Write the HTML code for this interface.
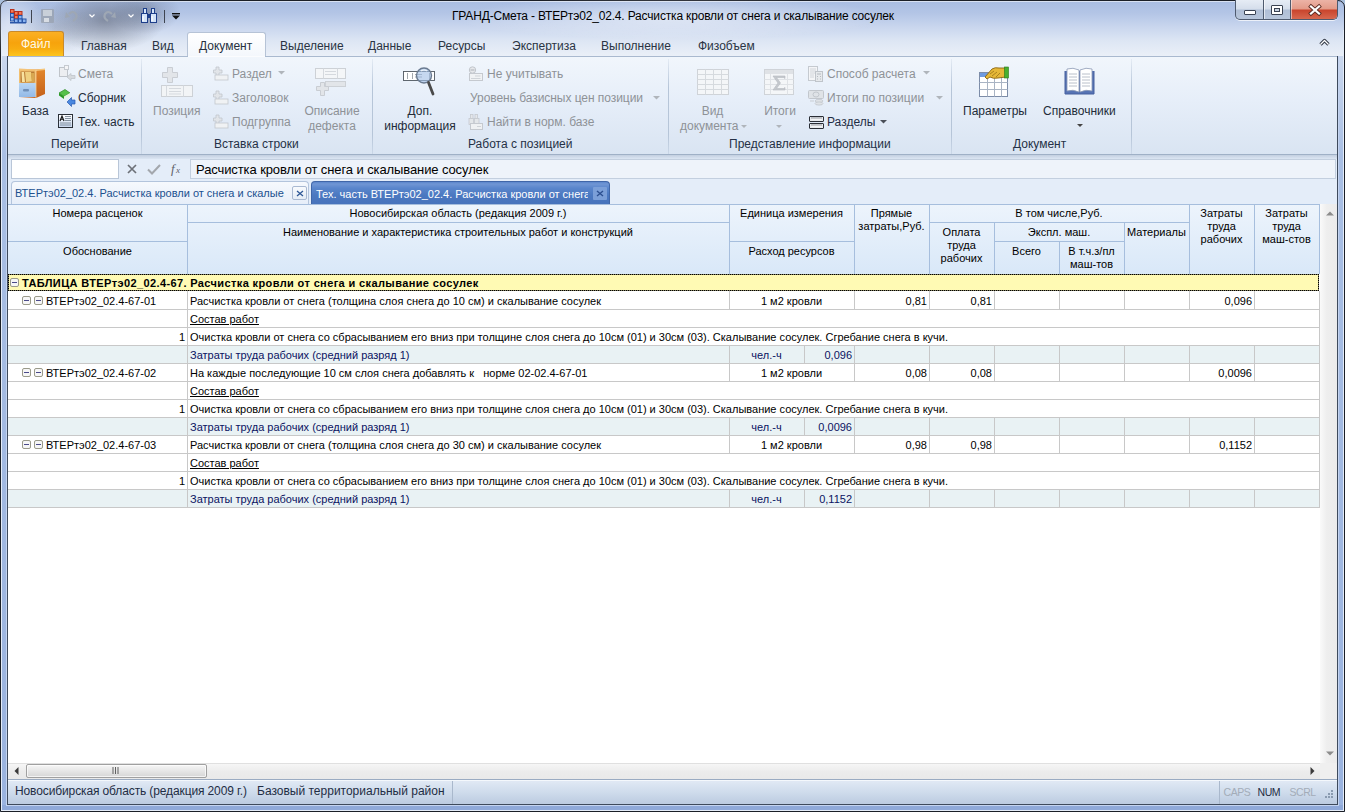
<!DOCTYPE html><html><head><meta charset="utf-8"><style>
*{margin:0;padding:0;box-sizing:border-box}
html,body{width:1345px;height:812px;overflow:hidden}
body{position:relative;font-family:"Liberation Sans",sans-serif;background:#a8bedb}
.a{position:absolute}
.t{position:absolute;white-space:nowrap;line-height:1}
svg.a{overflow:visible}
</style></head><body>
<div class="a" style="left:0px;top:0px;width:1345px;height:812px;background:linear-gradient(180deg,#a9bde2 0px,#b3c5e6 12px,#c9d6ee 26px,#dde6f4 40px,#ebf0f8 56px);border:1px solid #1b1f27;border-radius:7px 7px 0 0"></div>
<div class="a" style="left:0px;top:0px;width:1345px;height:56px;background:radial-gradient(ellipse 60px 32px at 105px 20px,rgba(70,75,90,.5),rgba(70,75,90,0)),radial-gradient(ellipse 35px 22px at 145px 12px,rgba(60,70,90,.3),rgba(60,70,90,0)),radial-gradient(ellipse 40px 26px at 55px 28px,rgba(90,100,120,.2),rgba(90,100,120,0)),radial-gradient(ellipse 220px 22px at 672px 18px,rgba(255,255,255,.5),rgba(255,255,255,0)),radial-gradient(ellipse 30px 35px at 12px 22px,rgba(255,255,255,.4),rgba(255,255,255,0));border-radius:7px 7px 0 0"></div>
<div class="a" style="left:7px;top:1px;width:1331px;height:1px;background:rgba(255,255,255,.55)"></div>
<div class="a" style="left:1px;top:56px;width:6px;height:755px;background:linear-gradient(#cbd8ee,#a9bfe4 100px,#9ab3df)"></div>
<div class="a" style="left:1338px;top:56px;width:6px;height:755px;background:linear-gradient(#cbd8ee,#a9bfe4 100px,#9ab3df)"></div>
<div class="a" style="left:1px;top:805px;width:1343px;height:6px;background:#8fa9d9"></div>
<div class="a" style="left:1px;top:30px;width:1px;height:781px;background:#e4ecf8"></div>
<div class="a" style="left:1343px;top:30px;width:1px;height:781px;background:#e4ecf8"></div>
<div class="a" style="left:6px;top:56px;width:1px;height:750px;background:#c4d4f0"></div>
<div class="a" style="left:1338px;top:56px;width:1px;height:750px;background:#c4d4f0"></div>
<div class="a" style="left:6px;top:805px;width:1333px;height:1px;background:#c4d4f0"></div>
<div class="a" style="left:1px;top:810px;width:1343px;height:1px;background:#e4ecf8"></div>
<div class="a" style="left:7px;top:56px;width:1px;height:749px;background:#3e4a5c"></div>
<div class="a" style="left:1337px;top:56px;width:1px;height:749px;background:#3e4a5c"></div>
<div class="a" style="left:7px;top:804px;width:1331px;height:1px;background:#3e4a5c"></div>
<div class="t " style="left:452px;top:9.84px;font-size:12px;color:#000;font-weight:normal;letter-spacing:-0.17px">ГРАНД-Смета - ВТЕРтэ02_02.4. Расчистка кровли от снега и скалывание сосулек</div>
<div class="a" style="left:1235px;top:0px;width:103px;height:20px;background:linear-gradient(#e6ecf5 0,#d5deeb 9px,#b0bfd6 10px,#b8c6db 19px);border:1px solid #4e5a6e;border-top:none;border-radius:0 0 5px 5px;box-shadow:0 1px 0 rgba(255,255,255,.7)"></div>
<div class="a" style="left:1263px;top:0px;width:1px;height:19px;background:#4e5a6e"></div>
<div class="a" style="left:1264px;top:0px;width:1px;height:19px;background:rgba(255,255,255,.6)"></div>
<div class="a" style="left:1290px;top:0px;width:1px;height:19px;background:#4e5a6e"></div>
<div class="a" style="left:1291px;top:0px;width:46px;height:19px;background:linear-gradient(#ecb3a6 0,#e39a88 9px,#c9442c 10px,#d7684f 19px);border-radius:0 0 4px 0;box-shadow:inset 1px 0 0 rgba(255,255,255,.5)"></div>
<div class="a" style="left:1244px;top:10px;width:12px;height:5px;background:#fff;border:1px solid #3a4252;border-radius:1px"></div>
<div class="a" style="left:1271px;top:5px;width:12px;height:10px;border:1px solid #3a4252;background:#fff;border-radius:1px"></div>
<div class="a" style="left:1274px;top:8px;width:6px;height:4px;border:1px solid #3a4252;background:#c8d2e0"></div>
<svg class="a" style="left:1309px;top:5px;" width="12" height="10" viewBox="0 0 12 10"><path d="M2 1.5 L10 8.5 M10 1.5 L2 8.5" stroke="#5a2a22" stroke-width="4" stroke-linecap="square"/><path d="M2 1.5 L10 8.5 M10 1.5 L2 8.5" stroke="#fff" stroke-width="2.3" stroke-linecap="square"/></svg>
<svg class="a" style="left:10px;top:9px;" width="16" height="15" viewBox="0 0 16 15"><g stroke-width="1"><rect x="0.5" y="0.5" width="3.5" height="3.5" fill="#f47a5a" stroke="#b8301c"/><rect x="0.5" y="4.5" width="3.5" height="3.5" fill="#8ab4f0" stroke="#2a56a8"/><rect x="0.5" y="8.5" width="3.5" height="3.5" fill="#8ab4f0" stroke="#2a56a8"/><rect x="4.5" y="2.5" width="3.5" height="3.5" fill="#f47a5a" stroke="#b8301c"/><rect x="4.5" y="6.5" width="3.5" height="3.5" fill="#f47a5a" stroke="#b8301c"/><rect x="4.5" y="10.0" width="3.5" height="3.5" fill="#8ab4f0" stroke="#2a56a8"/><rect x="8.5" y="2.5" width="3.5" height="3.5" fill="#f47a5a" stroke="#b8301c"/><rect x="8.5" y="6.5" width="3.5" height="3.5" fill="#8ab4f0" stroke="#2a56a8"/><rect x="8.5" y="10.0" width="3.5" height="3.5" fill="#8ab4f0" stroke="#2a56a8"/><rect x="12.5" y="10.0" width="3.5" height="3.5" fill="#8ab4f0" stroke="#2a56a8"/></g><rect x="0" y="13" width="16" height="1.5" fill="#2a56a8"/></svg>
<div class="a" style="left:31px;top:10px;width:1px;height:13px;background:#3e4450"></div>
<div class="a" style="left:41px;top:9px;width:13px;height:14px;background:#9aa3b0;border-radius:1px;opacity:.8"></div>
<div class="a" style="left:43px;top:10px;width:9px;height:6px;background:#c9d0d9"></div>
<div class="a" style="left:44px;top:18px;width:5px;height:4px;background:#d8dde4"></div>
<svg class="a" style="left:64px;top:9px;" width="14" height="14" viewBox="0 0 14 14"><path d="M5 5 Q9 1 12 5 Q14 9 9 12" fill="none" stroke="#9ea7b4" stroke-width="2.2"/><path d="M2 3 L6 8 L1 9 Z" fill="#9ea7b4"/></svg>
<svg class="a" style="left:89px;top:14px;" width="6" height="4" viewBox="0 0 6 4"><path d="M0.5 0.5 L3 3 L5.5 0.5" fill="none" stroke="#fff" stroke-width="1.2"/></svg>
<svg class="a" style="left:103px;top:9px;" width="14" height="14" viewBox="0 0 14 14"><path d="M9 5 Q5 1 2 5 Q0 9 5 12" fill="none" stroke="#9ea7b4" stroke-width="2.2"/><path d="M12 3 L8 8 L13 9 Z" fill="#9ea7b4"/></svg>
<svg class="a" style="left:128px;top:14px;" width="6" height="4" viewBox="0 0 6 4"><path d="M0.5 0.5 L3 3 L5.5 0.5" fill="none" stroke="#fff" stroke-width="1.2"/></svg>
<svg class="a" style="left:141px;top:8px;" width="16" height="15" viewBox="0 0 16 15"><g stroke="#1e3f8a" stroke-width="1" fill="#d4e4f8"><rect x="2.5" y=".5" width="3" height="5"/><rect x="10.5" y=".5" width="3" height="5"/><rect x=".5" y="5.5" width="6" height="9"/><rect x="9.5" y="5.5" width="6" height="9"/></g><rect x="6.5" y="6" width="3" height="4" fill="#1e3f8a"/><path d="M2 8 V13 M11 8 V13" stroke="#fff" stroke-width="1.2"/></svg>
<div class="a" style="left:164px;top:10px;width:1px;height:13px;background:#3e4450"></div>
<svg class="a" style="left:172px;top:13px;" width="8" height="7" viewBox="0 0 8 7"><rect x="0" y="0" width="8" height="1.4" fill="#111"/><path d="M0 2.6 L8 2.6 L4 6.6 Z" fill="#111"/></svg>
<div class="a" style="left:8px;top:31px;width:56px;height:25px;background:linear-gradient(#fbb025,#f7a30c 45%,#f8ac10 70%,#fcc51f);border:1px solid #c98a2a;border-bottom:none;border-radius:3px 3px 0 0"></div>
<div class="t " style="left:21px;top:37.84px;font-size:12px;color:#fffbe8;font-weight:normal;">Файл</div>
<div class="a" style="left:187px;top:32px;width:79px;height:25px;background:linear-gradient(#ffffff,#f3f7fc);border:1px solid #b6c3d6;border-bottom:none;border-radius:3px 3px 0 0"></div>
<div class="t " style="left:199px;top:39.84px;font-size:12px;color:#28313e;font-weight:normal;">Документ</div>
<div class="t " style="left:81px;top:39.84px;font-size:12px;color:#2a3443;font-weight:normal;">Главная</div>
<div class="t " style="left:152px;top:39.84px;font-size:12px;color:#2a3443;font-weight:normal;">Вид</div>
<div class="t " style="left:280px;top:39.84px;font-size:12px;color:#2a3443;font-weight:normal;">Выделение</div>
<div class="t " style="left:368px;top:39.84px;font-size:12px;color:#2a3443;font-weight:normal;">Данные</div>
<div class="t " style="left:438px;top:39.84px;font-size:12px;color:#2a3443;font-weight:normal;">Ресурсы</div>
<div class="t " style="left:512px;top:39.84px;font-size:12px;color:#2a3443;font-weight:normal;">Экспертиза</div>
<div class="t " style="left:601px;top:39.84px;font-size:12px;color:#2a3443;font-weight:normal;">Выполнение</div>
<div class="t " style="left:698px;top:39.84px;font-size:12px;color:#2a3443;font-weight:normal;">Физобъем</div>
<svg class="a" style="left:1319px;top:38px;" width="11" height="9" viewBox="0 0 11 9"><path d="M1.5 6.5 L5.5 2.5 L9.5 6.5" fill="none" stroke="#333a48" stroke-width="3.2" stroke-linejoin="round"/><path d="M1.5 6.5 L5.5 2.5 L9.5 6.5" fill="none" stroke="#fff" stroke-width="1.2" stroke-linejoin="round"/></svg>
<div class="a" style="left:8px;top:56px;width:1329px;height:99px;background:linear-gradient(#f1f6fc 0%,#e6eef9 45%,#d9e4f2 100%);border-top:1px solid #a9b9cf"></div>
<div class="a" style="left:8px;top:154px;width:1329px;height:1px;background:#9fb0c6"></div>
<div class="a" style="left:8px;top:155px;width:1329px;height:4px;background:linear-gradient(#c3cfe0,#dce6f3)"></div>
<div class="a" style="left:188px;top:56px;width:77px;height:1px;background:#fbfcfe"></div>
<div class="a" style="left:141px;top:59px;width:1px;height:95px;background:linear-gradient(rgba(180,195,215,.2),#b6c5d8 30%,#b6c5d8 80%,rgba(180,195,215,.4))"></div>
<div class="a" style="left:372px;top:59px;width:1px;height:95px;background:linear-gradient(rgba(180,195,215,.2),#b6c5d8 30%,#b6c5d8 80%,rgba(180,195,215,.4))"></div>
<div class="a" style="left:668px;top:59px;width:1px;height:95px;background:linear-gradient(rgba(180,195,215,.2),#b6c5d8 30%,#b6c5d8 80%,rgba(180,195,215,.4))"></div>
<div class="a" style="left:951px;top:59px;width:1px;height:95px;background:linear-gradient(rgba(180,195,215,.2),#b6c5d8 30%,#b6c5d8 80%,rgba(180,195,215,.4))"></div>
<div class="a" style="left:1131px;top:59px;width:1px;height:95px;background:linear-gradient(rgba(180,195,215,.2),#b6c5d8 30%,#b6c5d8 80%,rgba(180,195,215,.4))"></div>
<div class="t " style="left:51px;top:137.84px;font-size:12px;color:#253146;font-weight:normal;">Перейти</div>
<div class="t " style="left:214px;top:137.84px;font-size:12px;color:#253146;font-weight:normal;">Вставка строки</div>
<div class="t " style="left:468px;top:137.84px;font-size:12px;color:#253146;font-weight:normal;">Работа с позицией</div>
<div class="t " style="left:729px;top:137.84px;font-size:12px;color:#253146;font-weight:normal;">Представление информации</div>
<div class="t " style="left:1013px;top:137.84px;font-size:12px;color:#253146;font-weight:normal;">Документ</div>
<svg class="a" style="left:18px;top:67px;" width="29" height="33" viewBox="0 0 29 33"><defs><linearGradient id="cabs" x1="0" x2="0" y1="0" y2="1"><stop offset="0" stop-color="#e2872c"/><stop offset="1" stop-color="#c4601a"/></linearGradient><linearGradient id="drw" x1="0" x2="0" y1="0" y2="1"><stop offset="0" stop-color="#b9d6f4"/><stop offset="1" stop-color="#93b9e6"/></linearGradient></defs>
<path d="M1 2.5 L18 2.5 L27 2 L27 27 L18 31 L1 30 Z" fill="url(#cabs)"/>
<path d="M1 1.5 L18 2.5 L27 1.5 L27 3 L18 4 L1 3 Z" fill="#f4c47a"/>
<rect x="1" y="3" width="17" height="13" fill="#f2c070"/>
<rect x="2.5" y="4.5" width="14" height="11" fill="#b87a34"/>
<path d="M3.5 5 L6 5 L7 15 L4 15 Z" fill="#f8e2a0"/><path d="M7 5 L13 5 L14 14.5 L8 15 Z" fill="#f0d080"/><path d="M13 6 L16 6 L16 15 L14 15 Z" fill="#d8a850"/>
<rect x="1" y="16" width="17" height="14" fill="url(#drw)"/>
<rect x="5" y="22" width="6" height="2.5" rx="1" fill="#6f8fb8"/>
<path d="M18 3 L18 31" stroke="#f6d29a" stroke-width=".8"/></svg>
<div class="t " style="left:22px;top:104.84px;font-size:12px;color:#222b38;font-weight:normal;">База</div>
<svg class="a" style="left:58px;top:65px;" width="18" height="17" viewBox="0 0 18 17"><rect x="1.5" y="2.5" width="8" height="9" fill="#eceef1" stroke="#bfc4ca"/><rect x="6.5" y=".5" width="4" height="4" fill="#f4f5f7" stroke="#c5cad0"/><path d="M9 12 L13 8.5 L13 10.5 L17 10.5 L17 13.5 L13 13.5 L13 15.5 Z" fill="#d6dade" stroke="#bfc4ca" stroke-width=".8"/></svg>
<div class="t " style="left:78px;top:67.84px;font-size:12px;color:#8e9297;font-weight:normal;">Смета</div>
<svg class="a" style="left:58px;top:88px;" width="18" height="19" viewBox="0 0 18 19"><path d="M1 5 L7 1.5 L12 5 L6 8.5 Z" fill="#56c04a" stroke="#2a8a22" stroke-width=".7"/><path d="M1 5 L6 8.5 L6 11 L1 7.5 Z" fill="#2a9a24"/><path d="M6 8.5 L12 5 L12 7.5 L6 11 Z" fill="#e8f4e0"/><path d="M9 14 L13.5 9.5 L13.5 12 L17 12 L17 16 L13.5 16 L13.5 18.5 Z" fill="#4a88e0" stroke="#2a5ab0" stroke-width=".7"/></svg>
<div class="t " style="left:78px;top:91.84px;font-size:12px;color:#222b38;font-weight:normal;">Сборник</div>
<svg class="a" style="left:58px;top:114px;" width="16" height="15" viewBox="0 0 16 15"><defs><linearGradient id="txg" x1="0" x2="0" y1="0" y2="1"><stop offset="0" stop-color="#fff"/><stop offset="1" stop-color="#c8d8f0"/></linearGradient></defs><rect x=".5" y=".5" width="14" height="13" fill="url(#txg)" stroke="#2a3038"/><path d="M2 7 L4 2 L6 7 M2.8 5.3 H5.2" fill="none" stroke="#111" stroke-width="1.1"/><path d="M7 2.5 H13 M7 4.5 H13 M7 6.5 H13 M2 9 H13 M2 11 H13" stroke="#6a7888" stroke-width=".8"/></svg>
<div class="t " style="left:78px;top:115.84px;font-size:12px;color:#222b38;font-weight:normal;">Тех. часть</div>
<svg class="a" style="left:161px;top:67px;" width="32" height="30" viewBox="0 0 32 30"><path d="M6.5 .5 H11.5 V5.5 H16.5 V10.5 H11.5 V15.5 H6.5 V10.5 H1.5 V5.5 H6.5 Z" fill="#e2e5e9" stroke="#c9cdd3"/><rect x=".5" y="18.5" width="31" height="11" fill="#f2f4f6" stroke="#cdd1d6"/><path d="M5.5 18.5 V29.5 M22.5 18.5 V29.5 M8 21.5 H20 M8 24.5 H20 M8 27 H20" stroke="#d5d9de"/></svg>
<div class="t " style="left:153px;top:104.84px;font-size:12px;color:#8e9297;font-weight:normal;">Позиция</div>
<svg class="a" style="left:213px;top:66px;" width="16" height="15" viewBox="0 0 16 15"><path d="M3 1 H6 V4 H9 V7 H6 V10 H3 V7 H0.5 V4 H3 Z" fill="#e2e5e9" stroke="#c2c7cd" stroke-width=".8"/><rect x="2" y="9" width="13" height="5" fill="#f0f2f4" stroke="#c2c7cd" stroke-width=".8"/></svg>
<svg class="a" style="left:213px;top:90px;" width="16" height="15" viewBox="0 0 16 15"><path d="M3 1 H6 V4 H9 V7 H6 V10 H3 V7 H0.5 V4 H3 Z" fill="#e2e5e9" stroke="#c2c7cd" stroke-width=".8"/><rect x="2" y="9" width="13" height="5" fill="#f0f2f4" stroke="#c2c7cd" stroke-width=".8"/></svg>
<svg class="a" style="left:213px;top:114px;" width="16" height="15" viewBox="0 0 16 15"><path d="M3 1 H6 V4 H9 V7 H6 V10 H3 V7 H0.5 V4 H3 Z" fill="#e2e5e9" stroke="#c2c7cd" stroke-width=".8"/><rect x="2" y="9" width="13" height="5" fill="#f0f2f4" stroke="#c2c7cd" stroke-width=".8"/></svg>
<div class="t " style="left:232px;top:67.84px;font-size:12px;color:#8e9297;font-weight:normal;">Раздел</div>
<svg class="a" style="left:278px;top:71px;" width="7" height="4" viewBox="0 0 7 4"><path d="M0 0 H7 L3.5 3.5Z" fill="#b0b5bb"/></svg>
<div class="t " style="left:232px;top:91.84px;font-size:12px;color:#8e9297;font-weight:normal;">Заголовок</div>
<div class="t " style="left:232px;top:115.84px;font-size:12px;color:#8e9297;font-weight:normal;">Подгруппа</div>
<svg class="a" style="left:315px;top:68px;" width="32" height="29" viewBox="0 0 32 29"><rect x=".5" y=".5" width="30" height="10" fill="#f4f6f8" stroke="#cdd1d6"/><path d="M8.5 .5 V10.5 M22.5 .5 V10.5 M10 3.5 H21 M10 6.5 H21" stroke="#d5d9de"/><rect x="10.5" y="13.5" width="20" height="5" fill="#e2e5e9" stroke="#cdd1d6"/><path d="M5.5 14.5 H9.5 V18.5 H13.5 V22.5 H9.5 V27.5 H5.5 V22.5 H1.5 V18.5 H5.5 Z" fill="#e2e5e9" stroke="#c9cdd3"/></svg>
<div class="t" style="left:296px;width:72px;text-align:center;top:104.84px;font-size:12px;color:#8e9297;font-weight:normal;">Описание</div>
<div class="t" style="left:296px;width:72px;text-align:center;top:119.84px;font-size:12px;color:#8e9297;font-weight:normal;">дефекта</div>
<svg class="a" style="left:403px;top:66px;" width="36" height="32" viewBox="0 0 36 32"><rect x=".5" y="5.5" width="31" height="9" fill="#fff" stroke="#505860" stroke-width=".9"/><path d="M4.5 7 V13 M9.5 7 V13 M12 8.5 H19 M12 11 H19 M26.5 7 V13" stroke="#8a9098" stroke-width=".8"/><circle cx="21" cy="9.5" r="7.5" fill="rgba(160,190,230,.6)" stroke="#6a7a90" stroke-width="1.4"/><path d="M18 5 Q21 3 24 5" stroke="#fff" stroke-width="1.2" fill="none" opacity=".8"/><path d="M25.5 16.5 L30 28" stroke="#4a4a4a" stroke-width="2.8" stroke-linecap="round"/></svg>
<div class="t" style="left:380px;width:80px;text-align:center;top:104.84px;font-size:12px;color:#222b38;font-weight:normal;">Доп.</div>
<div class="t" style="left:380px;width:80px;text-align:center;top:119.84px;font-size:12px;color:#222b38;font-weight:normal;">информация</div>
<svg class="a" style="left:468px;top:66px;" width="16" height="16" viewBox="0 0 16 16"><circle cx="4.5" cy="4" r="3.2" fill="#e6e8eb" stroke="#c2c6cc"/><path d="M2.5 4 H6.5" stroke="#b5b9bf" stroke-width="1.2"/><rect x="1.5" y="7.5" width="13" height="7" fill="#f0f2f4" stroke="#c5c9cf"/><path d="M7 10 H12.5 M3 12.5 H12.5" stroke="#cfd3d8"/></svg>
<div class="t " style="left:487px;top:67.84px;font-size:12px;color:#8e9297;font-weight:normal;">Не учитывать</div>
<div class="t " style="left:470px;top:91.84px;font-size:12px;color:#8e9297;font-weight:normal;letter-spacing:-0.05px">Уровень базисных цен позиции</div>
<svg class="a" style="left:653px;top:96px;" width="7" height="4" viewBox="0 0 7 4"><path d="M0 0 H7 L3.5 3.5Z" fill="#b0b5bb"/></svg>
<svg class="a" style="left:468px;top:114px;" width="16" height="16" viewBox="0 0 16 16"><g fill="#e4e7ea" stroke="#c5c9cf" stroke-width=".8"><rect x="2.5" y=".5" width="2.5" height="4"/><rect x="7" y=".5" width="2.5" height="4"/><rect x="1" y="4.5" width="4.5" height="6"/><rect x="6.5" y="4.5" width="4.5" height="6"/></g><rect x="2.5" y="9.5" width="12" height="6" fill="#eff1f3" stroke="#c5c9cf"/><path d="M9 12.5 H13" stroke="#cfd3d8"/></svg>
<div class="t " style="left:487px;top:115.84px;font-size:12px;color:#8e9297;font-weight:normal;">Найти в норм. базе</div>
<svg class="a" style="left:697px;top:69px;" width="32" height="26" viewBox="0 0 32 26"><rect x=".5" y=".5" width="31" height="25" fill="#f4f6f8" stroke="#cfd3d8"/><path d="M.5 5.5 H31.5 M.5 10.5 H31.5 M.5 15.5 H31.5 M.5 20.5 H31.5 M8.5 .5 V25.5 M16.5 .5 V25.5 M24.5 .5 V25.5" stroke="#d6dade"/></svg>
<div class="t" style="left:680px;width:65px;text-align:center;top:104.84px;font-size:12px;color:#8e9297;font-weight:normal;">Вид</div>
<div class="t " style="left:680px;top:119.84px;font-size:12px;color:#8e9297;font-weight:normal;">документа</div>
<svg class="a" style="left:741px;top:125px;" width="6" height="3" viewBox="0 0 6 3"><path d="M0 0 H6 L3 3Z" fill="#b0b5bb"/></svg>
<svg class="a" style="left:764px;top:69px;" width="30" height="26" viewBox="0 0 30 26"><rect x=".5" y=".5" width="29" height="25" fill="#f4f6f8" stroke="#cfd3d8"/><rect x="1" y="1" width="28" height="4" fill="#dfe2e6"/><path d="M.5 10.5 H29.5 M.5 15.5 H29.5 M.5 20.5 H29.5 M6.5 5 V25.5 M23.5 5 V25.5" stroke="#dfe2e6"/><path d="M9 7 H21 L21 9.5 L19.5 8.5 H12.5 L16.5 14 L12.5 19.5 H19.5 L21 18.5 L21 21 H9 L14 14 Z" fill="#c5c9ce" stroke="#b5b9bf" stroke-width=".6"/></svg>
<div class="t" style="left:755px;width:50px;text-align:center;top:104.84px;font-size:12px;color:#8e9297;font-weight:normal;">Итоги</div>
<svg class="a" style="left:776px;top:125px;" width="6" height="3" viewBox="0 0 6 3"><path d="M0 0 H6 L3 3Z" fill="#b0b5bb"/></svg>
<svg class="a" style="left:808px;top:66px;" width="17" height="16" viewBox="0 0 17 16"><rect x=".5" y=".5" width="9" height="14" fill="#f4f5f7" stroke="#c5cad0"/><path d="M2 3 H8 M2 5 H8 M2 7 H8 M2 9 H6 M2 11 H6" stroke="#c9cdd3" stroke-width=".8"/><rect x="7.5" y="5.5" width="7" height="10" fill="#e6e9ec" stroke="#bfc4ca"/><path d="M9 8 H13 M9 10.5 H10 M12 10.5 H13 M9 13 H10 M12 13 H13" stroke="#b5bac0"/></svg>
<div class="t " style="left:827px;top:67.84px;font-size:12px;color:#8e9297;font-weight:normal;">Способ расчета</div>
<svg class="a" style="left:923px;top:71px;" width="7" height="4" viewBox="0 0 7 4"><path d="M0 0 H7 L3.5 3.5Z" fill="#b0b5bb"/></svg>
<svg class="a" style="left:808px;top:89px;" width="17" height="17" viewBox="0 0 17 17"><rect x=".5" y="1.5" width="15" height="8" rx="1" fill="#dfe3e7" stroke="#c2c7cd"/><ellipse cx="8" cy="5.5" rx="3" ry="2.5" fill="none" stroke="#c2c7cd"/><ellipse cx="11" cy="12" rx="4" ry="1.6" fill="#e0e3e7" stroke="#c2c7cd" stroke-width=".8"/><ellipse cx="11" cy="14.5" rx="4" ry="1.6" fill="#e0e3e7" stroke="#c2c7cd" stroke-width=".8"/><path d="M2 12 H6" stroke="#c9cdd3"/></svg>
<div class="t " style="left:827px;top:91.84px;font-size:12px;color:#8e9297;font-weight:normal;">Итоги по позиции</div>
<svg class="a" style="left:936px;top:96px;" width="7" height="4" viewBox="0 0 7 4"><path d="M0 0 H7 L3.5 3.5Z" fill="#b0b5bb"/></svg>
<svg class="a" style="left:809px;top:116px;" width="15" height="13" viewBox="0 0 15 13"><rect x=".5" y=".5" width="14" height="5" rx=".5" fill="#e8ebee" stroke="#2a2e36"/><rect x=".5" y="7.5" width="14" height="5" rx=".5" fill="#e8ebee" stroke="#2a2e36"/><path d="M2.5 3 H12.5 M2.5 10 H12.5" stroke="#fff" stroke-width="1.2"/><path d="M2 2 H13 M2 9 H13" stroke="#5a6068" stroke-width=".6"/></svg>
<div class="t " style="left:827px;top:115.84px;font-size:12px;color:#1f2d44;font-weight:normal;">Разделы</div>
<svg class="a" style="left:880px;top:120px;" width="7" height="4" viewBox="0 0 7 4"><path d="M0 0 H7 L3.5 3.5Z" fill="#4a4f58"/></svg>
<svg class="a" style="left:978px;top:66px;" width="34" height="32" viewBox="0 0 34 32"><rect x="1.5" y="6.5" width="28" height="24" fill="#fff" stroke="#7c8ca8"/><rect x="2" y="7" width="27" height="4" fill="#6f9be0"/><path d="M1.5 16.5 H29.5 M1.5 23.5 H29.5 M9.5 11 V30.5 M16.5 11 V30.5 M23.5 11 V30.5" stroke="#a9b4c4"/><path d="M7 11 L14 3 Q17 1 21 2 L27 2 L28 11 L20 12 Q15 13 12 11 L9 13 Z" fill="#e6b838" stroke="#8a6410" stroke-width=".9"/><path d="M12 8 L16 5 M14 10 L19 6 M18 11 L22 7" stroke="#9a7418" stroke-width=".8"/><rect x="26.5" y="1" width="4" height="11" fill="#49b030" stroke="#2a7a1a" stroke-width=".6"/></svg>
<div class="t " style="left:963px;top:104.84px;font-size:12px;color:#222b38;font-weight:normal;">Параметры</div>
<svg class="a" style="left:1064px;top:67px;" width="31" height="29" viewBox="0 0 31 29"><path d="M1 4 L1 27 L30 27 L30 4" fill="#5673b4" stroke="#46609e" stroke-width="1"/><path d="M3 2 Q9 0 15 3 L15 25 Q9 22 3 24 Z" fill="#fff" stroke="#8a98b4" stroke-width=".8"/><path d="M28 2 Q22 0 16 3 L16 25 Q22 22 28 24 Z" fill="#fff" stroke="#8a98b4" stroke-width=".8"/><path d="M5 7 H13 M5 10 H13 M5 13 H13 M5 16 H13 M5 19 H13 M18 7 H26 M18 10 H26 M18 13 H26 M18 16 H26 M18 19 H26" stroke="#a8b0bc" stroke-width=".8"/></svg>
<div class="t " style="left:1043px;top:104.84px;font-size:12px;color:#222b38;font-weight:normal;">Справочники</div>
<svg class="a" style="left:1077px;top:124px;" width="6" height="3" viewBox="0 0 6 3"><path d="M0 0 H6 L3 3Z" fill="#444"/></svg>
<div class="a" style="left:8px;top:159px;width:1329px;height:22px;background:#e4edf9"></div>
<div class="a" style="left:11px;top:159px;width:108px;height:20px;background:#fff;border:1px solid #b9c6d8"></div>
<svg class="a" style="left:127px;top:164px;" width="10" height="10" viewBox="0 0 10 10"><path d="M1 1 L9 9 M9 1 L1 9" stroke="#6d7178" stroke-width="1.7"/></svg>
<svg class="a" style="left:147px;top:164px;" width="14" height="11" viewBox="0 0 14 11"><path d="M1 5.5 L5 9.5 L13 1" fill="none" stroke="#a3a7ad" stroke-width="2"/></svg>
<svg class="a" style="left:171px;top:162px;" width="13" height="14" viewBox="0 0 13 14"><text x="0" y="11" font-size="13" font-style="italic" font-family="Liberation Serif" fill="#5d6168">f</text><text x="5" y="11" font-size="9" font-style="italic" font-family="Liberation Serif" fill="#5d6168">x</text></svg>
<div class="a" style="left:190px;top:159px;width:1146px;height:20px;background:#eef3fa;border:1px solid #c3cfdf"></div>
<div class="t " style="left:196px;top:163.00px;font-size:13px;color:#000;font-weight:normal;letter-spacing:-0.1px">Расчистка кровли от снега и скалывание сосулек</div>
<div class="a" style="left:8px;top:180px;width:1329px;height:24px;background:#e4edf9"></div>
<div class="a" style="left:11px;top:181px;width:298px;height:23px;background:linear-gradient(#f6f9fd,#e6eef9);border:1px solid #b3c4dc;border-bottom:none;border-radius:4px 4px 0 0"></div>
<div class="t " style="left:15px;top:187.69px;font-size:11px;color:#20508f;font-weight:normal;">ВТЕРтэ02_02.4. Расчистка кровли от снега и скалые</div>
<div class="a" style="left:292px;top:186px;width:15px;height:14px;background:linear-gradient(#f8fafd,#e6edf6);border:1px solid #a9b9d2;border-radius:2px"></div>
<svg class="a" style="left:296px;top:190px;" width="8" height="7" viewBox="0 0 8 7"><path d="M1 1 L7 6 M7 1 L1 6" stroke="#2e5796" stroke-width="1.3"/></svg>
<div class="a" style="left:311px;top:181px;width:299px;height:23px;background:linear-gradient(#5b86cc,#7096d4 2px,#5a86cc 6px,#4b78c0 60%,#4773bc);border:1px solid #4066a8;border-bottom:none;border-radius:4px 4px 0 0"></div>
<div class="t" style="left:316px;top:188.7px;font-size:11px;color:#fff;width:272px;overflow:hidden">Тех. часть ВТЕРтэ02_02.4. Расчистка кровли от снега</div>
<div class="a" style="left:593px;top:187px;width:14px;height:13px;background:#7b9fd8;border-radius:1px"></div>
<svg class="a" style="left:596px;top:190px;" width="8" height="7" viewBox="0 0 8 7"><path d="M1 1 L7 6 M7 1 L1 6" stroke="#2c4f90" stroke-width="1.4"/></svg>
<div class="a" style="left:8px;top:204px;width:1329px;height:559px;background:#fff"></div>
<div class="a" style="left:8px;top:204px;width:1312px;height:70px;background:linear-gradient(#edf4fc,#d9e8f8)"></div>
<div class="a" style="left:8px;top:204px;width:1312px;height:1px;background:#a6bedd"></div>
<div class="a" style="left:187px;top:204px;width:1px;height:70px;background:#a6bedd"></div>
<div class="a" style="left:729px;top:204px;width:1px;height:70px;background:#a6bedd"></div>
<div class="a" style="left:854px;top:204px;width:1px;height:70px;background:#a6bedd"></div>
<div class="a" style="left:929px;top:204px;width:1px;height:70px;background:#a6bedd"></div>
<div class="a" style="left:1189px;top:204px;width:1px;height:70px;background:#a6bedd"></div>
<div class="a" style="left:1254px;top:204px;width:1px;height:70px;background:#a6bedd"></div>
<div class="a" style="left:1319px;top:204px;width:1px;height:70px;background:#a6bedd"></div>
<div class="a" style="left:994px;top:222px;width:1px;height:52px;background:#a6bedd"></div>
<div class="a" style="left:1124px;top:222px;width:1px;height:52px;background:#a6bedd"></div>
<div class="a" style="left:1059px;top:241px;width:1px;height:33px;background:#a6bedd"></div>
<div class="a" style="left:8px;top:241px;width:179px;height:1px;background:#a6bedd"></div>
<div class="a" style="left:187px;top:222px;width:542px;height:1px;background:#a6bedd"></div>
<div class="a" style="left:729px;top:241px;width:125px;height:1px;background:#a6bedd"></div>
<div class="a" style="left:929px;top:222px;width:260px;height:1px;background:#a6bedd"></div>
<div class="a" style="left:994px;top:241px;width:130px;height:1px;background:#a6bedd"></div>
<div class="t" style="left:8px;width:179px;text-align:center;top:207.69px;font-size:11px;color:#000;font-weight:normal;">Номера расценок</div>
<div class="t" style="left:8px;width:179px;text-align:center;top:245.69px;font-size:11px;color:#000;font-weight:normal;">Обоснование</div>
<div class="t" style="left:187px;width:542px;text-align:center;top:207.69px;font-size:11px;color:#000;font-weight:normal;">Новосибирская область (редакция 2009 г.)</div>
<div class="t" style="left:187px;width:542px;text-align:center;top:226.69px;font-size:11px;color:#000;font-weight:normal;">Наименование и характеристика строительных работ и конструкций</div>
<div class="t" style="left:729px;width:125px;text-align:center;top:207.69px;font-size:11px;color:#000;font-weight:normal;">Единица измерения</div>
<div class="t" style="left:729px;width:125px;text-align:center;top:245.69px;font-size:11px;color:#000;font-weight:normal;">Расход ресурсов</div>
<div class="t" style="left:854px;width:75px;text-align:center;top:207.69px;font-size:11px;color:#000;font-weight:normal;">Прямые</div>
<div class="t" style="left:854px;width:75px;text-align:center;top:220.69px;font-size:11px;color:#000;font-weight:normal;">затраты,Руб.</div>
<div class="t" style="left:929px;width:260px;text-align:center;top:207.69px;font-size:11px;color:#000;font-weight:normal;">В том числе,Руб.</div>
<div class="t" style="left:929px;width:65px;text-align:center;top:226.69px;font-size:11px;color:#000;font-weight:normal;">Оплата</div>
<div class="t" style="left:929px;width:65px;text-align:center;top:239.69px;font-size:11px;color:#000;font-weight:normal;">труда</div>
<div class="t" style="left:929px;width:65px;text-align:center;top:252.69px;font-size:11px;color:#000;font-weight:normal;">рабочих</div>
<div class="t" style="left:994px;width:130px;text-align:center;top:226.69px;font-size:11px;color:#000;font-weight:normal;">Экспл. маш.</div>
<div class="t" style="left:994px;width:65px;text-align:center;top:245.69px;font-size:11px;color:#000;font-weight:normal;">Всего</div>
<div class="t" style="left:1059px;width:65px;text-align:center;top:245.69px;font-size:11px;color:#000;font-weight:normal;">В т.ч.з/пл</div>
<div class="t" style="left:1059px;width:65px;text-align:center;top:258.69px;font-size:11px;color:#000;font-weight:normal;">маш-тов</div>
<div class="t" style="left:1124px;width:65px;text-align:center;top:226.69px;font-size:11px;color:#000;font-weight:normal;">Материалы</div>
<div class="t" style="left:1189px;width:65px;text-align:center;top:207.69px;font-size:11px;color:#000;font-weight:normal;">Затраты</div>
<div class="t" style="left:1189px;width:65px;text-align:center;top:220.69px;font-size:11px;color:#000;font-weight:normal;">труда</div>
<div class="t" style="left:1189px;width:65px;text-align:center;top:233.69px;font-size:11px;color:#000;font-weight:normal;">рабочих</div>
<div class="t" style="left:1254px;width:65px;text-align:center;top:207.69px;font-size:11px;color:#000;font-weight:normal;">Затраты</div>
<div class="t" style="left:1254px;width:65px;text-align:center;top:220.69px;font-size:11px;color:#000;font-weight:normal;">труда</div>
<div class="t" style="left:1254px;width:65px;text-align:center;top:233.69px;font-size:11px;color:#000;font-weight:normal;">маш-стов</div>
<div class="a" style="left:1320px;top:204px;width:17px;height:559px;background:linear-gradient(90deg,#fafafa,#eeeeee 40%,#ebebeb)"></div>
<svg class="a" style="left:1326px;top:211px;" width="8" height="5" viewBox="0 0 8 5"><path d="M0 4.5 L4 0.5 L8 4.5Z" fill="#8c8c8c"/></svg>
<svg class="a" style="left:1326px;top:751px;" width="8" height="5" viewBox="0 0 8 5"><path d="M0 .5 L4 4.5 L8 .5Z" fill="#8c8c8c"/></svg>
<div class="a" style="left:8px;top:274px;width:1311px;height:17px;background:#fffab4;border:1px dotted #000"></div>
<svg class="a" style="left:8px;top:274px" width="1311" height="17"><rect x=".5" y=".5" width="1310" height="16" fill="none" stroke="#000" stroke-dasharray="1 1"/></svg>
<svg class="a" style="left:10px;top:278px;" width="9" height="9" viewBox="0 0 9 9"><rect x=".5" y=".5" width="8" height="8" rx="1.5" fill="#f6f6f6" stroke="#9a9a8a"/><rect x="2" y="4" width="5" height="1" fill="#4a4a8a"/></svg>
<div class="t " style="left:22px;top:277.69px;font-size:11px;color:#000;font-weight:bold;letter-spacing:0.38px">ТАБЛИЦА ВТЕРтэ02_02.4-67. Расчистка кровли от снега и скалывание сосулек</div>
<svg class="a" style="left:22px;top:296px;" width="9" height="9" viewBox="0 0 9 9"><rect x=".5" y=".5" width="8" height="8" rx="1.5" fill="#f6f6f6" stroke="#9a9a8a"/><rect x="2" y="4" width="5" height="1" fill="#4a4a8a"/></svg>
<svg class="a" style="left:34px;top:296px;" width="9" height="9" viewBox="0 0 9 9"><rect x=".5" y=".5" width="8" height="8" rx="1.5" fill="#f6f6f6" stroke="#9a9a8a"/><rect x="2" y="4" width="5" height="1" fill="#4a4a8a"/></svg>
<div class="t " style="left:46px;top:295.69px;font-size:11px;color:#000;font-weight:normal;">ВТЕРтэ02_02.4-67-01</div>
<div class="t " style="left:190px;top:295.69px;font-size:11px;color:#000;font-weight:normal;">Расчистка кровли от снега (толщина слоя снега до 10 см) и скалывание сосулек</div>
<div class="t" style="left:729px;width:125px;text-align:center;top:295.69px;font-size:11px;color:#000;font-weight:normal;">1 м2 кровли</div>
<div class="t" style="right:418px;top:295.69px;font-size:11px;color:#000;font-weight:normal;">0,81</div>
<div class="t" style="right:353px;top:295.69px;font-size:11px;color:#000;font-weight:normal;">0,81</div>
<div class="t" style="right:93px;top:295.69px;font-size:11px;color:#000;font-weight:normal;">0,096</div>
<div class="a" style="left:187px;top:291px;width:1px;height:18px;background:#c8c8c8"></div>
<div class="a" style="left:729px;top:291px;width:1px;height:18px;background:#c8c8c8"></div>
<div class="a" style="left:854px;top:291px;width:1px;height:18px;background:#c8c8c8"></div>
<div class="a" style="left:929px;top:291px;width:1px;height:18px;background:#c8c8c8"></div>
<div class="a" style="left:994px;top:291px;width:1px;height:18px;background:#c8c8c8"></div>
<div class="a" style="left:1059px;top:291px;width:1px;height:18px;background:#c8c8c8"></div>
<div class="a" style="left:1124px;top:291px;width:1px;height:18px;background:#c8c8c8"></div>
<div class="a" style="left:1189px;top:291px;width:1px;height:18px;background:#c8c8c8"></div>
<div class="a" style="left:1254px;top:291px;width:1px;height:18px;background:#c8c8c8"></div>
<div class="a" style="left:1319px;top:291px;width:1px;height:18px;background:#c8c8c8"></div>
<div class="a" style="left:8px;top:309px;width:1312px;height:1px;background:#c8c8c8"></div>
<div class="t " style="left:190px;top:313.69px;font-size:11px;color:#000;font-weight:normal;"><u>Состав работ</u></div>
<div class="a" style="left:187px;top:309px;width:1px;height:18px;background:#c8c8c8"></div>
<div class="a" style="left:1319px;top:309px;width:1px;height:18px;background:#c8c8c8"></div>
<div class="a" style="left:8px;top:327px;width:1312px;height:1px;background:#c8c8c8"></div>
<div class="t" style="right:1160px;top:331.69px;font-size:11px;color:#000;font-weight:normal;">1</div>
<div class="t " style="left:190px;top:331.69px;font-size:11px;color:#000;font-weight:normal;">Очистка кровли от снега со сбрасыванием его вниз при толщине слоя снега до 10см (01) и 30см (03). Скалывание сосулек. Сгребание снега в кучи.</div>
<div class="a" style="left:187px;top:327px;width:1px;height:18px;background:#c8c8c8"></div>
<div class="a" style="left:1319px;top:327px;width:1px;height:18px;background:#c8c8c8"></div>
<div class="a" style="left:8px;top:345px;width:1312px;height:1px;background:#c8c8c8"></div>
<div class="a" style="left:8px;top:346px;width:1311px;height:17px;background:#e9f2f4"></div>
<div class="t " style="left:190px;top:349.69px;font-size:11px;color:#0b1262;font-weight:normal;">Затраты труда рабочих (средний разряд 1)</div>
<div class="t" style="left:729px;width:75px;text-align:center;top:349.69px;font-size:11px;color:#0b1262;font-weight:normal;">чел.-ч</div>
<div class="t" style="right:493px;top:349.69px;font-size:11px;color:#0b1262;font-weight:normal;">0,096</div>
<div class="a" style="left:187px;top:345px;width:1px;height:18px;background:#c8c8c8"></div>
<div class="a" style="left:729px;top:345px;width:1px;height:18px;background:#c8c8c8"></div>
<div class="a" style="left:854px;top:345px;width:1px;height:18px;background:#c8c8c8"></div>
<div class="a" style="left:929px;top:345px;width:1px;height:18px;background:#c8c8c8"></div>
<div class="a" style="left:994px;top:345px;width:1px;height:18px;background:#c8c8c8"></div>
<div class="a" style="left:1059px;top:345px;width:1px;height:18px;background:#c8c8c8"></div>
<div class="a" style="left:1124px;top:345px;width:1px;height:18px;background:#c8c8c8"></div>
<div class="a" style="left:1189px;top:345px;width:1px;height:18px;background:#c8c8c8"></div>
<div class="a" style="left:1254px;top:345px;width:1px;height:18px;background:#c8c8c8"></div>
<div class="a" style="left:1319px;top:345px;width:1px;height:18px;background:#c8c8c8"></div>
<div class="a" style="left:804px;top:345px;width:1px;height:18px;background:#c8c8c8"></div>
<div class="a" style="left:8px;top:363px;width:1312px;height:1px;background:#c8c8c8"></div>
<svg class="a" style="left:22px;top:368px;" width="9" height="9" viewBox="0 0 9 9"><rect x=".5" y=".5" width="8" height="8" rx="1.5" fill="#f6f6f6" stroke="#9a9a8a"/><rect x="2" y="4" width="5" height="1" fill="#4a4a8a"/></svg>
<svg class="a" style="left:34px;top:368px;" width="9" height="9" viewBox="0 0 9 9"><rect x=".5" y=".5" width="8" height="8" rx="1.5" fill="#f6f6f6" stroke="#9a9a8a"/><rect x="2" y="4" width="5" height="1" fill="#4a4a8a"/></svg>
<div class="t " style="left:46px;top:367.69px;font-size:11px;color:#000;font-weight:normal;">ВТЕРтэ02_02.4-67-02</div>
<div class="t " style="left:190px;top:367.69px;font-size:11px;color:#000;font-weight:normal;">На каждые последующие 10 см слоя снега добавлять к&nbsp;&nbsp; норме 02-02.4-67-01</div>
<div class="t" style="left:729px;width:125px;text-align:center;top:367.69px;font-size:11px;color:#000;font-weight:normal;">1 м2 кровли</div>
<div class="t" style="right:418px;top:367.69px;font-size:11px;color:#000;font-weight:normal;">0,08</div>
<div class="t" style="right:353px;top:367.69px;font-size:11px;color:#000;font-weight:normal;">0,08</div>
<div class="t" style="right:93px;top:367.69px;font-size:11px;color:#000;font-weight:normal;">0,0096</div>
<div class="a" style="left:187px;top:363px;width:1px;height:18px;background:#c8c8c8"></div>
<div class="a" style="left:729px;top:363px;width:1px;height:18px;background:#c8c8c8"></div>
<div class="a" style="left:854px;top:363px;width:1px;height:18px;background:#c8c8c8"></div>
<div class="a" style="left:929px;top:363px;width:1px;height:18px;background:#c8c8c8"></div>
<div class="a" style="left:994px;top:363px;width:1px;height:18px;background:#c8c8c8"></div>
<div class="a" style="left:1059px;top:363px;width:1px;height:18px;background:#c8c8c8"></div>
<div class="a" style="left:1124px;top:363px;width:1px;height:18px;background:#c8c8c8"></div>
<div class="a" style="left:1189px;top:363px;width:1px;height:18px;background:#c8c8c8"></div>
<div class="a" style="left:1254px;top:363px;width:1px;height:18px;background:#c8c8c8"></div>
<div class="a" style="left:1319px;top:363px;width:1px;height:18px;background:#c8c8c8"></div>
<div class="a" style="left:8px;top:381px;width:1312px;height:1px;background:#c8c8c8"></div>
<div class="t " style="left:190px;top:385.69px;font-size:11px;color:#000;font-weight:normal;"><u>Состав работ</u></div>
<div class="a" style="left:187px;top:381px;width:1px;height:18px;background:#c8c8c8"></div>
<div class="a" style="left:1319px;top:381px;width:1px;height:18px;background:#c8c8c8"></div>
<div class="a" style="left:8px;top:399px;width:1312px;height:1px;background:#c8c8c8"></div>
<div class="t" style="right:1160px;top:403.69px;font-size:11px;color:#000;font-weight:normal;">1</div>
<div class="t " style="left:190px;top:403.69px;font-size:11px;color:#000;font-weight:normal;">Очистка кровли от снега со сбрасыванием его вниз при толщине слоя снега до 10см (01) и 30см (03). Скалывание сосулек. Сгребание снега в кучи.</div>
<div class="a" style="left:187px;top:399px;width:1px;height:18px;background:#c8c8c8"></div>
<div class="a" style="left:1319px;top:399px;width:1px;height:18px;background:#c8c8c8"></div>
<div class="a" style="left:8px;top:417px;width:1312px;height:1px;background:#c8c8c8"></div>
<div class="a" style="left:8px;top:418px;width:1311px;height:17px;background:#e9f2f4"></div>
<div class="t " style="left:190px;top:421.69px;font-size:11px;color:#0b1262;font-weight:normal;">Затраты труда рабочих (средний разряд 1)</div>
<div class="t" style="left:729px;width:75px;text-align:center;top:421.69px;font-size:11px;color:#0b1262;font-weight:normal;">чел.-ч</div>
<div class="t" style="right:493px;top:421.69px;font-size:11px;color:#0b1262;font-weight:normal;">0,0096</div>
<div class="a" style="left:187px;top:417px;width:1px;height:18px;background:#c8c8c8"></div>
<div class="a" style="left:729px;top:417px;width:1px;height:18px;background:#c8c8c8"></div>
<div class="a" style="left:854px;top:417px;width:1px;height:18px;background:#c8c8c8"></div>
<div class="a" style="left:929px;top:417px;width:1px;height:18px;background:#c8c8c8"></div>
<div class="a" style="left:994px;top:417px;width:1px;height:18px;background:#c8c8c8"></div>
<div class="a" style="left:1059px;top:417px;width:1px;height:18px;background:#c8c8c8"></div>
<div class="a" style="left:1124px;top:417px;width:1px;height:18px;background:#c8c8c8"></div>
<div class="a" style="left:1189px;top:417px;width:1px;height:18px;background:#c8c8c8"></div>
<div class="a" style="left:1254px;top:417px;width:1px;height:18px;background:#c8c8c8"></div>
<div class="a" style="left:1319px;top:417px;width:1px;height:18px;background:#c8c8c8"></div>
<div class="a" style="left:804px;top:417px;width:1px;height:18px;background:#c8c8c8"></div>
<div class="a" style="left:8px;top:435px;width:1312px;height:1px;background:#c8c8c8"></div>
<svg class="a" style="left:22px;top:440px;" width="9" height="9" viewBox="0 0 9 9"><rect x=".5" y=".5" width="8" height="8" rx="1.5" fill="#f6f6f6" stroke="#9a9a8a"/><rect x="2" y="4" width="5" height="1" fill="#4a4a8a"/></svg>
<svg class="a" style="left:34px;top:440px;" width="9" height="9" viewBox="0 0 9 9"><rect x=".5" y=".5" width="8" height="8" rx="1.5" fill="#f6f6f6" stroke="#9a9a8a"/><rect x="2" y="4" width="5" height="1" fill="#4a4a8a"/></svg>
<div class="t " style="left:46px;top:439.69px;font-size:11px;color:#000;font-weight:normal;">ВТЕРтэ02_02.4-67-03</div>
<div class="t " style="left:190px;top:439.69px;font-size:11px;color:#000;font-weight:normal;">Расчистка кровли от снега (толщина слоя снега до 30 см) и скалывание сосулек</div>
<div class="t" style="left:729px;width:125px;text-align:center;top:439.69px;font-size:11px;color:#000;font-weight:normal;">1 м2 кровли</div>
<div class="t" style="right:418px;top:439.69px;font-size:11px;color:#000;font-weight:normal;">0,98</div>
<div class="t" style="right:353px;top:439.69px;font-size:11px;color:#000;font-weight:normal;">0,98</div>
<div class="t" style="right:93px;top:439.69px;font-size:11px;color:#000;font-weight:normal;">0,1152</div>
<div class="a" style="left:187px;top:435px;width:1px;height:18px;background:#c8c8c8"></div>
<div class="a" style="left:729px;top:435px;width:1px;height:18px;background:#c8c8c8"></div>
<div class="a" style="left:854px;top:435px;width:1px;height:18px;background:#c8c8c8"></div>
<div class="a" style="left:929px;top:435px;width:1px;height:18px;background:#c8c8c8"></div>
<div class="a" style="left:994px;top:435px;width:1px;height:18px;background:#c8c8c8"></div>
<div class="a" style="left:1059px;top:435px;width:1px;height:18px;background:#c8c8c8"></div>
<div class="a" style="left:1124px;top:435px;width:1px;height:18px;background:#c8c8c8"></div>
<div class="a" style="left:1189px;top:435px;width:1px;height:18px;background:#c8c8c8"></div>
<div class="a" style="left:1254px;top:435px;width:1px;height:18px;background:#c8c8c8"></div>
<div class="a" style="left:1319px;top:435px;width:1px;height:18px;background:#c8c8c8"></div>
<div class="a" style="left:8px;top:453px;width:1312px;height:1px;background:#c8c8c8"></div>
<div class="t " style="left:190px;top:457.69px;font-size:11px;color:#000;font-weight:normal;"><u>Состав работ</u></div>
<div class="a" style="left:187px;top:453px;width:1px;height:18px;background:#c8c8c8"></div>
<div class="a" style="left:1319px;top:453px;width:1px;height:18px;background:#c8c8c8"></div>
<div class="a" style="left:8px;top:471px;width:1312px;height:1px;background:#c8c8c8"></div>
<div class="t" style="right:1160px;top:475.69px;font-size:11px;color:#000;font-weight:normal;">1</div>
<div class="t " style="left:190px;top:475.69px;font-size:11px;color:#000;font-weight:normal;">Очистка кровли от снега со сбрасыванием его вниз при толщине слоя снега до 10см (01) и 30см (03). Скалывание сосулек. Сгребание снега в кучи.</div>
<div class="a" style="left:187px;top:471px;width:1px;height:18px;background:#c8c8c8"></div>
<div class="a" style="left:1319px;top:471px;width:1px;height:18px;background:#c8c8c8"></div>
<div class="a" style="left:8px;top:489px;width:1312px;height:1px;background:#c8c8c8"></div>
<div class="a" style="left:8px;top:490px;width:1311px;height:17px;background:#e9f2f4"></div>
<div class="t " style="left:190px;top:493.69px;font-size:11px;color:#0b1262;font-weight:normal;">Затраты труда рабочих (средний разряд 1)</div>
<div class="t" style="left:729px;width:75px;text-align:center;top:493.69px;font-size:11px;color:#0b1262;font-weight:normal;">чел.-ч</div>
<div class="t" style="right:493px;top:493.69px;font-size:11px;color:#0b1262;font-weight:normal;">0,1152</div>
<div class="a" style="left:187px;top:489px;width:1px;height:18px;background:#c8c8c8"></div>
<div class="a" style="left:729px;top:489px;width:1px;height:18px;background:#c8c8c8"></div>
<div class="a" style="left:854px;top:489px;width:1px;height:18px;background:#c8c8c8"></div>
<div class="a" style="left:929px;top:489px;width:1px;height:18px;background:#c8c8c8"></div>
<div class="a" style="left:994px;top:489px;width:1px;height:18px;background:#c8c8c8"></div>
<div class="a" style="left:1059px;top:489px;width:1px;height:18px;background:#c8c8c8"></div>
<div class="a" style="left:1124px;top:489px;width:1px;height:18px;background:#c8c8c8"></div>
<div class="a" style="left:1189px;top:489px;width:1px;height:18px;background:#c8c8c8"></div>
<div class="a" style="left:1254px;top:489px;width:1px;height:18px;background:#c8c8c8"></div>
<div class="a" style="left:1319px;top:489px;width:1px;height:18px;background:#c8c8c8"></div>
<div class="a" style="left:804px;top:489px;width:1px;height:18px;background:#c8c8c8"></div>
<div class="a" style="left:8px;top:507px;width:1312px;height:1px;background:#c8c8c8"></div>
<div class="a" style="left:8px;top:763px;width:1312px;height:16px;background:linear-gradient(#f6f6f6,#ececec 50%,#e9e9e9);border-top:1px solid #e0e0e0"></div>
<div class="a" style="left:1320px;top:763px;width:17px;height:16px;background:#efefef"></div>
<svg class="a" style="left:14px;top:767px;" width="5" height="8" viewBox="0 0 5 8"><path d="M4.5 0 L0.5 4 L4.5 8Z" fill="#3a3a3a"/></svg>
<svg class="a" style="left:1310px;top:767px;" width="5" height="8" viewBox="0 0 5 8"><path d="M.5 0 L4.5 4 L.5 8Z" fill="#3a3a3a"/></svg>
<div class="a" style="left:26px;top:764px;width:181px;height:14px;background:linear-gradient(#f6f6f6,#e6e6e6 50%,#d6d6d6);border:1px solid #a0a0a0;border-radius:2px;box-shadow:inset 0 0 0 1px rgba(255,255,255,.7)"></div>
<svg class="a" style="left:112px;top:767px;" width="7" height="7" viewBox="0 0 7 7"><path d="M1 0 V7 M3.5 0 V7 M6 0 V7" stroke="#606060" stroke-width="1"/></svg>
<div class="a" style="left:8px;top:779px;width:1329px;height:25px;background:linear-gradient(#e2eaf5,#cfdcec 50%,#bccbe0);border-top:1px solid #9aabc2;box-shadow:inset 0 1px 0 #f4f8fc"></div>
<div class="t " style="left:15px;top:784.84px;font-size:12px;color:#1f2d44;font-weight:normal;letter-spacing:-0.12px">Новосибирская область (редакция 2009 г.)</div>
<div class="t " style="left:257px;top:784.84px;font-size:12px;color:#1f2d44;font-weight:normal;">Базовый территориальный район</div>
<div class="a" style="left:452px;top:781px;width:1px;height:23px;background:#a9b8cc"></div>
<div class="a" style="left:1219px;top:781px;width:1px;height:23px;background:#a9b8cc"></div>
<div class="t " style="left:1223.5px;top:787.11px;font-size:10.5px;color:#a3acb8;font-weight:normal;letter-spacing:-0.45px">CAPS</div>
<div class="t " style="left:1257.5px;top:787.11px;font-size:10.5px;color:#1f2d44;font-weight:normal;letter-spacing:-0.45px">NUM</div>
<div class="t " style="left:1289.5px;top:787.11px;font-size:10.5px;color:#a3acb8;font-weight:normal;letter-spacing:-0.45px">SCRL</div>
<svg class="a" style="left:1324px;top:789px;" width="10" height="10" viewBox="0 0 10 10"><g fill="#8a9bb0"><rect x="7" y="1" width="2" height="2"/><rect x="4" y="4" width="2" height="2"/><rect x="7" y="4" width="2" height="2"/><rect x="1" y="7" width="2" height="2"/><rect x="4" y="7" width="2" height="2"/><rect x="7" y="7" width="2" height="2"/></g></svg>
</body></html>
